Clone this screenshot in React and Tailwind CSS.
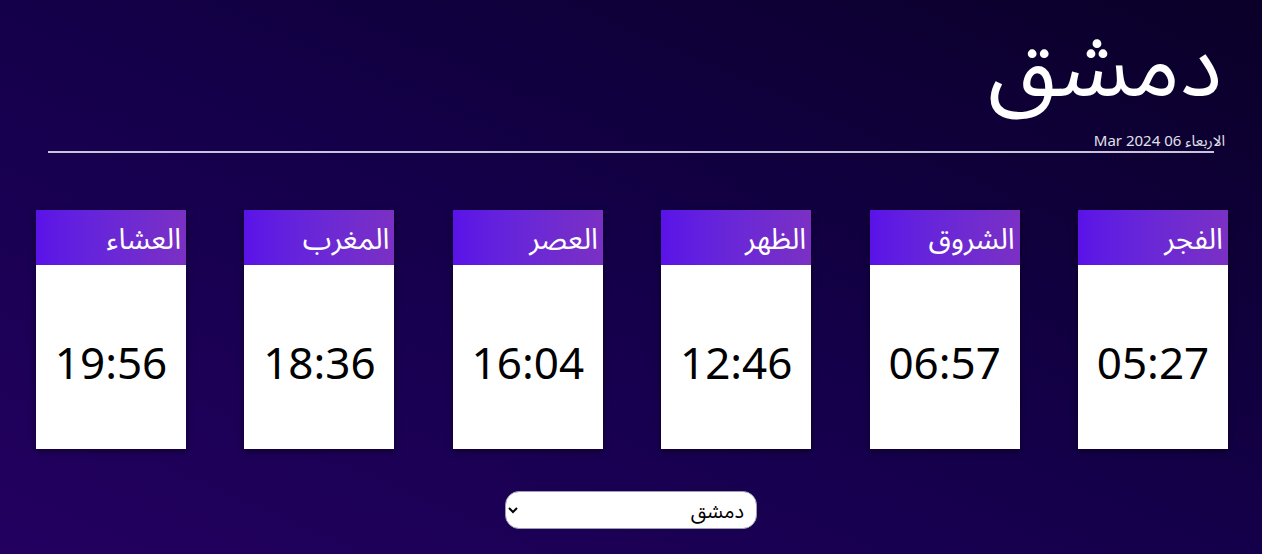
import React from 'react'

const prayers = [
  { name: 'الفجر', time: '05:27' },
  { name: 'الشروق', time: '06:57' },
  { name: 'الظهر', time: '12:46' },
  { name: 'العصر', time: '16:04' },
  { name: 'المغرب', time: '18:36' },
  { name: 'العشاء', time: '19:56' },
]

function PrayerCard({ name, time }) {
  return (
    <div className="w-[150px] h-[239px] flex flex-col shadow-[0_2px_6px_rgba(0,0,0,0.5)]">
      <div className="h-[55px] bg-gradient-to-r from-[#5a12e8] to-[#7b30c4] flex items-center justify-start pr-[5px]">
        <span className="text-white text-[29px] leading-none">{name}</span>
      </div>
      <div className="flex-1 bg-white flex items-center justify-center pt-[10px]">
        <span className="text-black text-[44px] leading-none" dir="ltr">{time}</span>
      </div>
    </div>
  )
}

export default function App() {
  return (
    <div
      dir="rtl"
      className="w-full h-[554px] bg-gradient-to-tr from-[#230060] via-[#14004a] to-[#0a0028] font-['Noto_Sans','Noto_Sans_Arabic','DejaVu_Sans',sans-serif]"
    >
      <div className="pr-[40px]">
        <h1 className="text-white text-[88px] leading-[124px] font-normal">دمشق</h1>
        <p className="text-[#e0e0ec] text-[15px] leading-none mt-[9px] mr-[-3px]">الاربعاء 06 Mar 2024</p>
      </div>
      <div className="mx-auto w-[1166px] h-[2px] bg-[#c8c4dc] mt-[3px]" />

      <div className="flex justify-between pr-[34px] pl-[36px] mt-[57px]">
        {prayers.map((p) => (
          <PrayerCard key={p.name} name={p.name} time={p.time} />
        ))}
      </div>

      <div className="flex justify-center mt-[42px]">
        <select className="w-[252px] h-[38px] bg-white rounded-[14px] border border-gray-400 text-black text-[20px] pr-[8px] pl-[4px]">
          <option>دمشق</option>
        </select>
      </div>
    </div>
  )
}
